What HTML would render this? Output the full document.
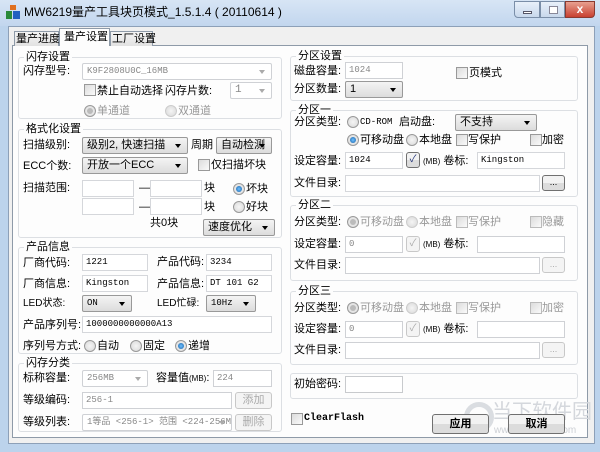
<!DOCTYPE html>
<html><head><meta charset="utf-8"><style>
*{box-sizing:border-box;margin:0;padding:0}
body{width:600px;height:452px;overflow:hidden;background:#bcd3ec;font-family:"Liberation Sans","Noto Sans CJK SC",sans-serif;font-size:11px;color:#000;position:relative}
.a{position:absolute}
.t{position:absolute;white-space:nowrap;line-height:14px;font-size:11px}
.g{position:absolute;border:1px solid #dcdfe3;border-radius:3px;background:#fdfdfd}
.gt{position:absolute;background:#fdfdfd;padding:0 2px;line-height:14px;white-space:nowrap;font-size:11px}
.in{position:absolute;border:1px solid #abadb3;background:#fff;height:17px;font-family:"Liberation Mono","Noto Sans CJK SC",monospace;font-size:9px;line-height:15px;padding-left:3px;white-space:nowrap;overflow:hidden}
.dis{color:#888;border-color:#cfd1d5}
.cb{position:absolute;border:1px solid #999;border-radius:2px;background:linear-gradient(#f4f4f4,#dcdcdc);height:17px;line-height:15px;padding-left:4px;white-space:nowrap;overflow:hidden;font-size:11px}
.cb:after{content:"";position:absolute;right:6px;top:6px;border:3.5px solid transparent;border-top:4px solid #000}
.cd:after{border-top-color:#aaa}
.ck{position:absolute;width:12px;height:12px;border:1px solid #999;background:linear-gradient(135deg,#dcdcdc,#fafafa)}
.rd{position:absolute;width:12px;height:12px;border:1px solid #999;border-radius:50%;background:radial-gradient(#f5f5f5,#d8d8d8)}
.rs:after{content:"";position:absolute;left:2px;top:2px;width:6px;height:6px;border-radius:50%;background:radial-gradient(#6fc0ff,#1560a8)}
.rx:after{content:"";position:absolute;left:2px;top:2px;width:6px;height:6px;border-radius:50%;background:#bbb}
.bt{position:absolute;border:1px solid #707070;border-radius:3px;background:linear-gradient(#f2f2f2 50%,#dcdcdc 50%);text-align:center;line-height:18px;font-size:11px}
.bd{border-color:#c8c8c8;color:#aaa;background:#f4f4f4}
.gr{color:#999}
</style></head><body>
<div class="a" style="left:0;top:0;width:600px;height:26px;background:linear-gradient(#d7e5f5,#c2d6ee)"></div>
<div class="a" style="left:6px;top:5px;width:14px;height:14px">
<div class="a" style="left:4px;top:0;width:6px;height:5px;background:#e07020"></div>
<div class="a" style="left:0;top:6px;width:6px;height:8px;background:#2a8a3a"></div>
<div class="a" style="left:7px;top:6px;width:7px;height:8px;background:#2060c0"></div></div>
<div class="t" style="left:24px;top:5px;font-size:12px">MW6219量产工具块页模式_1.5.1.4 ( 20110614 )</div>
<div class="a" style="left:514px;top:1px;width:26px;height:17px;border:1px solid #7a8ea8;border-radius:0 0 0 4px;background:linear-gradient(#e8f0fa,#c8d8ec)"><div class="a" style="left:8px;top:9px;width:9px;height:3px;background:#fff;border:1px solid #556"></div></div>
<div class="a" style="left:540px;top:1px;width:25px;height:17px;border:1px solid #7a8ea8;background:linear-gradient(#e8f0fa,#c8d8ec)"><div class="a" style="left:8px;top:4px;width:9px;height:8px;border:1px solid #889;background:#fff"></div></div>
<div class="a" style="left:565px;top:1px;width:30px;height:17px;border:1px solid #8a3a30;border-radius:0 0 4px 0;background:linear-gradient(#e8a090,#c84030);color:#fff;font-weight:bold;text-align:center;line-height:15px;font-size:12px">x</div>
<div class="a" style="left:8px;top:26px;width:587px;height:418px;background:#f0f0f0;border:1px solid #8da0b8"></div>
<div class="a" style="left:12px;top:45px;width:576px;height:393px;border:1px solid #8e9aa8;background:#fdfdfd"></div>
<div class="a" style="left:14px;top:31px;width:45px;height:15px;border:1px solid #8e9aa8;border-bottom:none;background:linear-gradient(#f4f4f4,#e2e2e2)"></div>
<div class="t" style="left:16px;top:32px">量产进度</div>
<div class="a" style="left:59px;top:28px;width:51px;height:18px;border:1px solid #8e9aa8;border-bottom:none;background:#fdfdfd"></div>
<div class="t" style="left:64px;top:30px">量产设置</div>
<div class="a" style="left:110px;top:31px;width:43px;height:15px;border:1px solid #8e9aa8;border-bottom:none;background:linear-gradient(#f4f4f4,#e2e2e2)"></div>
<div class="t" style="left:112px;top:32px">工厂设置</div>

<div class="g" style="left:18px;top:57px;width:264px;height:62px"></div><div class="gt" style="left:24px;top:50px">闪存设置</div>
<div class="t" style="left:23px;top:64px">闪存型号:</div>
<div class="in dis cd cb" style="left:82px;top:63px;width:190px;background:#fff;border-color:#cfd1d5;font-family:'Liberation Mono',monospace;font-size:9px">K9F2808U0C_16MB</div>
<div class="ck" style="left:84px;top:84px"></div><div class="t" style="left:97px;top:84px">禁止自动选择</div>
<div class="t" style="left:165px;top:84px">闪存片数:</div>
<div class="in dis cd cb" style="left:230px;top:82px;width:42px;background:#fff;border-color:#cfd1d5">1</div>
<div class="rd rx" style="left:84px;top:105px"></div><div class="t gr" style="left:97px;top:104px">单通道</div>
<div class="rd" style="left:165px;top:105px;border-color:#ccc"></div><div class="t gr" style="left:178px;top:104px">双通道</div>

<div class="g" style="left:18px;top:129px;width:264px;height:109px"></div><div class="gt" style="left:24px;top:122px">格式化设置</div>
<div class="t" style="left:23px;top:138px">扫描级别:</div>
<div class="cb" style="left:82px;top:137px;width:106px">级别2, 快速扫描</div>
<div class="t" style="left:191px;top:138px">周期</div>
<div class="cb" style="left:216px;top:137px;width:56px">自动检测</div>
<div class="t" style="left:23px;top:159px">ECC个数:</div>
<div class="cb" style="left:82px;top:157px;width:106px">开放一个ECC</div>
<div class="ck" style="left:198px;top:159px"></div><div class="t" style="left:211px;top:158px">仅扫描坏块</div>
<div class="t" style="left:23px;top:181px">扫描范围:</div>
<div class="in" style="left:82px;top:180px;width:52px;border-color:#d5d7db"></div><div class="t" style="left:139px;top:181px">—</div>
<div class="in" style="left:150px;top:180px;width:52px;border-color:#d5d7db"></div><div class="t" style="left:204px;top:181px">块</div>
<div class="rd rs" style="left:233px;top:183px"></div><div class="t" style="left:246px;top:182px">坏块</div>
<div class="in" style="left:82px;top:198px;width:52px;border-color:#d5d7db"></div><div class="t" style="left:139px;top:200px">—</div>
<div class="in" style="left:150px;top:198px;width:52px;border-color:#d5d7db"></div><div class="t" style="left:204px;top:200px">块</div>
<div class="rd" style="left:233px;top:201px"></div><div class="t" style="left:246px;top:200px">好块</div>
<div class="t" style="left:150px;top:216px">共0块</div>
<div class="cb" style="left:203px;top:219px;width:72px">速度优化</div>

<div class="g" style="left:18px;top:247px;width:264px;height:107px"></div><div class="gt" style="left:24px;top:240px">产品信息</div>
<div class="t" style="left:23px;top:256px">厂商代码:</div><div class="in" style="left:82px;top:254px;width:66px;border-color:#d5d7db">1221</div>
<div class="t" style="left:157px;top:255px">产品代码:</div><div class="in" style="left:206px;top:254px;width:66px;border-color:#d5d7db">3234</div>
<div class="t" style="left:23px;top:277px">厂商信息:</div><div class="in" style="left:82px;top:275px;width:66px;border-color:#d5d7db">Kingston</div>
<div class="t" style="left:157px;top:277px">产品信息:</div><div class="in" style="left:206px;top:275px;width:66px;border-color:#d5d7db">DT 101 G2</div>
<div class="t" style="left:23px;top:297px;font-size:10px">LED状态:</div><div class="cb" style="left:82px;top:295px;width:50px;font-family:'Liberation Mono',monospace;font-size:9px">ON</div>
<div class="t" style="left:157px;top:297px;font-size:10px">LED忙碌:</div><div class="cb" style="left:206px;top:295px;width:50px;font-family:'Liberation Mono',monospace;font-size:9px">10Hz</div>
<div class="t" style="left:23px;top:318px">产品序列号:</div><div class="in" style="left:82px;top:316px;width:190px;border-color:#d5d7db">1000000000000A13</div>
<div class="t" style="left:23px;top:339px">序列号方式:</div>
<div class="rd" style="left:84px;top:340px"></div><div class="t" style="left:97px;top:339px">自动</div>
<div class="rd" style="left:130px;top:340px"></div><div class="t" style="left:143px;top:339px">固定</div>
<div class="rd rs" style="left:175px;top:340px"></div><div class="t" style="left:188px;top:339px">递增</div>

<div class="g" style="left:18px;top:363px;width:264px;height:69px"></div><div class="gt" style="left:24px;top:356px">闪存分类</div>
<div class="t" style="left:23px;top:371px">标称容量:</div><div class="in dis cd cb" style="left:82px;top:370px;width:66px;background:#fff;border-color:#cfd1d5;font-size:9px">256MB</div>
<div class="t" style="left:156px;top:371px">容量值<span style="font-size:8px">(MB)</span>:</div><div class="in dis" style="left:213px;top:370px;width:59px">224</div>
<div class="t" style="left:23px;top:393px">等级编码:</div><div class="in dis" style="left:82px;top:392px;width:150px">256-1</div>
<div class="bt bd" style="left:235px;top:392px;width:37px;height:17px;line-height:15px">添加</div>
<div class="t" style="left:23px;top:415px">等级列表:</div><div class="in dis cd cb" style="left:82px;top:414px;width:150px;background:#fff;border-color:#cfd1d5;font-size:9px">1等品 &lt;256-1&gt; 范围 &lt;224-256M</div>
<div class="bt bd" style="left:235px;top:414px;width:37px;height:17px;line-height:15px">删除</div>

<div class="g" style="left:290px;top:56px;width:288px;height:45px"></div><div class="gt" style="left:296px;top:49px">分区设置</div>
<div class="t" style="left:294px;top:64px">磁盘容量:</div><div class="in dis" style="left:345px;top:62px;width:58px">1024</div>
<div class="ck" style="left:456px;top:67px"></div><div class="t" style="left:469px;top:66px">页模式</div>
<div class="t" style="left:294px;top:82px">分区数量:</div><div class="cb" style="left:345px;top:81px;width:58px">1</div>

<div class="g" style="left:290px;top:110px;width:288px;height:87px"></div><div class="gt" style="left:296px;top:103px">分区一</div>
<div class="t" style="left:294px;top:115px">分区类型:</div>
<div class="rd" style="left:347px;top:116px"></div><div class="t" style="left:360px;top:115px;font-family:'Liberation Mono',monospace;font-size:9px">CD-ROM</div>
<div class="t" style="left:399px;top:115px">启动盘:</div><div class="cb" style="left:455px;top:114px;width:82px">不支持</div>
<div class="rd rs" style="left:347px;top:134px"></div><div class="t" style="left:360px;top:133px">可移动盘</div>
<div class="rd" style="left:406px;top:134px"></div><div class="t" style="left:419px;top:133px">本地盘</div>
<div class="ck" style="left:456px;top:134px"></div><div class="t" style="left:468px;top:133px">写保护</div>
<div class="ck" style="left:530px;top:134px"></div><div class="t" style="left:542px;top:133px">加密</div>
<div class="t" style="left:294px;top:154px">设定容量:</div><div class="in" style="left:345px;top:152px;width:58px;border-color:#d5d7db">1024</div>
<div class="bt" style="left:406px;top:152px;width:14px;height:16px;line-height:13px;font-size:10px;color:#237">✓</div>
<div class="t" style="left:423px;top:154px"><span style="font-size:8px">(MB)</span> 卷标:</div><div class="in" style="left:477px;top:152px;width:88px;border-color:#d5d7db">Kingston</div>
<div class="t" style="left:294px;top:176px">文件目录:</div><div class="in" style="left:345px;top:175px;width:195px;border-color:#d5d7db"></div>
<div class="bt" style="left:542px;top:175px;width:23px;height:16px;line-height:12px;font-size:9px">...</div>

<div class="g" style="left:290px;top:205px;width:288px;height:76px"></div><div class="gt" style="left:296px;top:198px">分区二</div>
<div class="t" style="left:294px;top:215px">分区类型:</div>
<div class="rd rx" style="left:347px;top:216px"></div><div class="t gr" style="left:360px;top:215px">可移动盘</div>
<div class="rd" style="left:406px;top:216px;border-color:#ccc"></div><div class="t gr" style="left:419px;top:215px">本地盘</div>
<div class="ck" style="left:456px;top:216px;border-color:#bbb"></div><div class="t gr" style="left:468px;top:215px">写保护</div>
<div class="ck" style="left:530px;top:216px;border-color:#bbb"></div><div class="t gr" style="left:542px;top:215px">隐藏</div>
<div class="t" style="left:294px;top:237px">设定容量:</div><div class="in dis" style="left:345px;top:236px;width:58px">0</div>
<div class="bt bd" style="left:406px;top:236px;width:14px;height:16px;line-height:13px;font-size:10px">✓</div>
<div class="t" style="left:423px;top:237px"><span style="font-size:8px">(MB)</span> 卷标:</div><div class="in dis" style="left:477px;top:236px;width:88px"></div>
<div class="t" style="left:294px;top:258px">文件目录:</div><div class="in dis" style="left:345px;top:257px;width:195px"></div>
<div class="bt bd" style="left:542px;top:257px;width:23px;height:16px;line-height:12px;font-size:9px">...</div>

<div class="g" style="left:290px;top:291px;width:288px;height:74px"></div><div class="gt" style="left:296px;top:284px">分区三</div>
<div class="t" style="left:294px;top:301px">分区类型:</div>
<div class="rd rx" style="left:347px;top:302px"></div><div class="t gr" style="left:360px;top:301px">可移动盘</div>
<div class="rd" style="left:406px;top:302px;border-color:#ccc"></div><div class="t gr" style="left:419px;top:301px">本地盘</div>
<div class="ck" style="left:456px;top:302px;border-color:#bbb"></div><div class="t gr" style="left:468px;top:301px">写保护</div>
<div class="ck" style="left:530px;top:302px;border-color:#bbb"></div><div class="t gr" style="left:542px;top:301px">加密</div>
<div class="t" style="left:294px;top:322px">设定容量:</div><div class="in dis" style="left:345px;top:321px;width:58px">0</div>
<div class="bt bd" style="left:406px;top:321px;width:14px;height:16px;line-height:13px;font-size:10px">✓</div>
<div class="t" style="left:423px;top:322px"><span style="font-size:8px">(MB)</span> 卷标:</div><div class="in dis" style="left:477px;top:321px;width:88px"></div>
<div class="t" style="left:294px;top:343px">文件目录:</div><div class="in dis" style="left:345px;top:342px;width:195px"></div>
<div class="bt bd" style="left:542px;top:342px;width:23px;height:16px;line-height:12px;font-size:9px">...</div>

<div class="g" style="left:290px;top:373px;width:288px;height:26px"></div>
<div class="t" style="left:294px;top:377px">初始密码:</div><div class="in" style="left:345px;top:376px;width:58px;border-color:#c8cacd"></div>

<div class="ck" style="left:291px;top:413px"></div><div class="t" style="left:304px;top:412px;font-family:'Liberation Mono',monospace;font-size:10px;font-weight:bold">ClearFlash</div>
<div class="t" style="left:492px;top:400px;font-size:20px;line-height:24px;color:#d4d7dc">当下软件园</div>
<div class="t" style="left:494px;top:424px;font-size:10px;color:#cdd0d5">www.downxia.com</div>
<div class="a" style="left:464px;top:402px;width:30px;height:30px;border:5px solid #dadde1;border-radius:50%"></div>
<div class="bt" style="left:432px;top:414px;width:57px;height:20px;font-weight:bold">应用</div>
<div class="bt" style="left:508px;top:414px;width:57px;height:20px;font-weight:bold">取消</div>
</body></html>
